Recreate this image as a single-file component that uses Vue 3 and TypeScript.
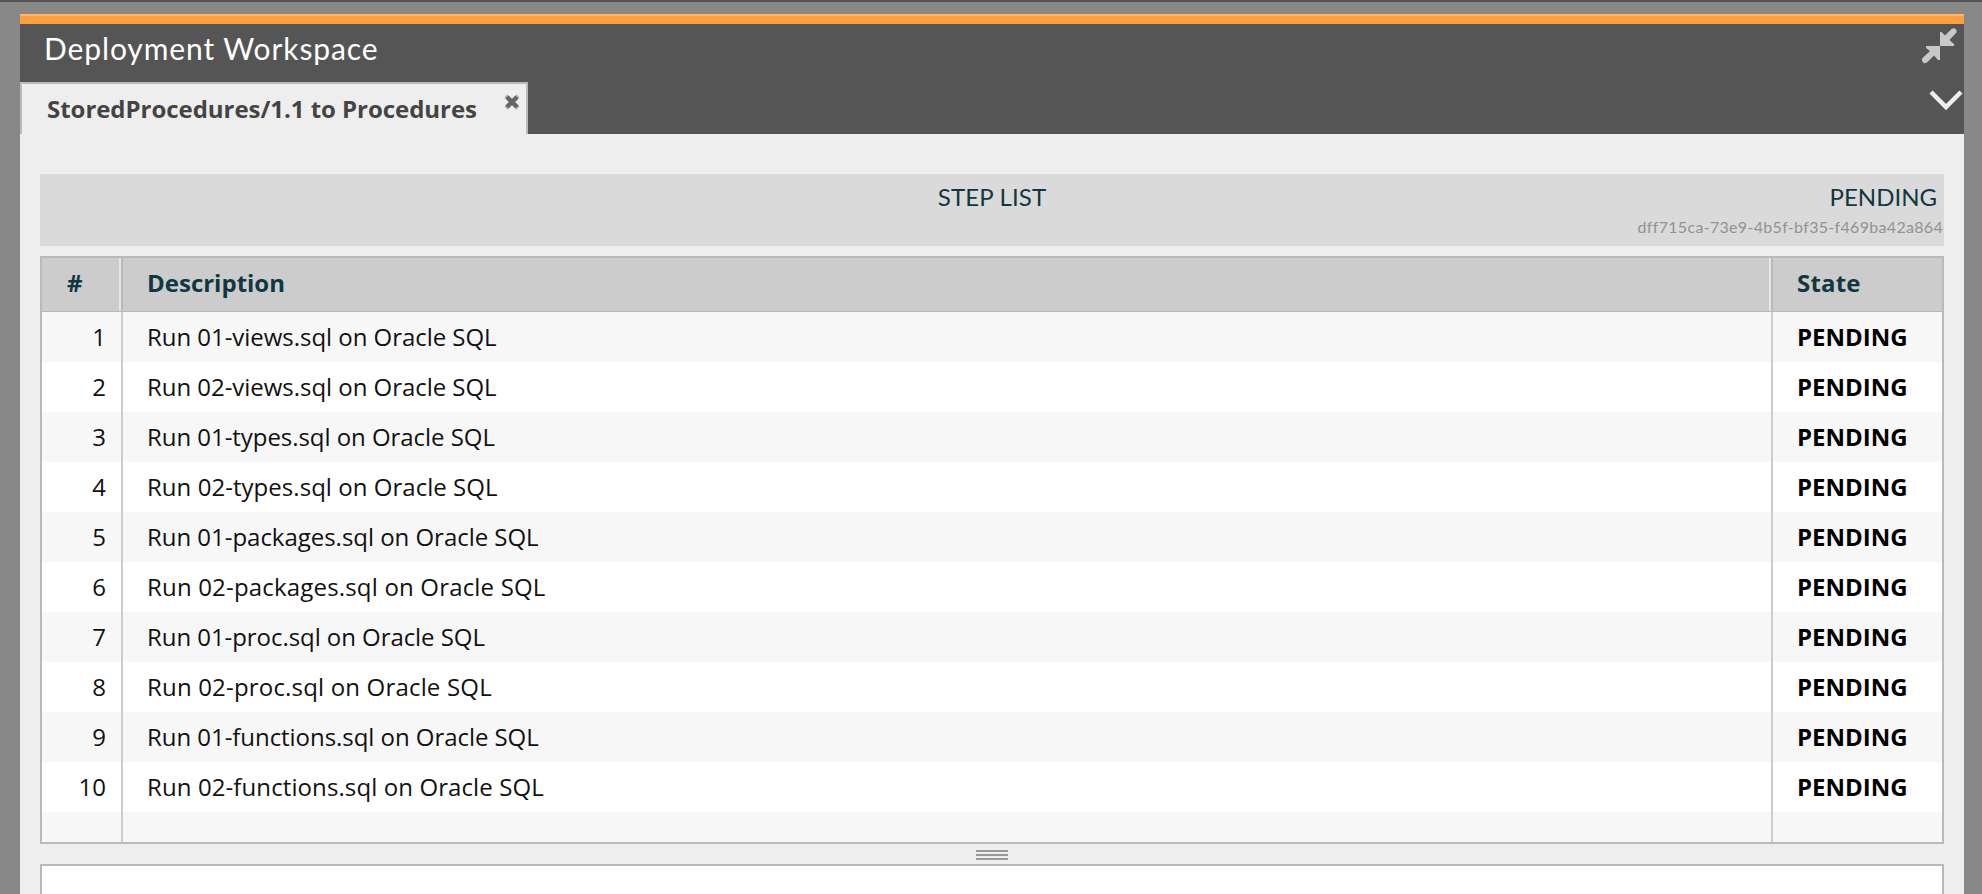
<script setup lang="ts">
interface Step {
  id: number
  description: string
  state: string
  tracking: number
}

// File stem and the letter spacing (px) of its line
const files: [string, number][] = [
  ['01-views', -0.04],
  ['02-views', -0.04],
  ['01-types', -0.05],
  ['02-types', 0.04],
  ['01-packages', -0.03],
  ['02-packages', 0.18],
  ['01-proc', -0.06],
  ['02-proc', 0.18],
  ['01-functions', -0.05],
  ['02-functions', 0.1],
]

const steps: Step[] = files.map(([file, tracking], i) => ({
  id: i + 1,
  description: `Run ${file}.sql on Oracle SQL`,
  state: 'PENDING',
  tracking,
}))
</script>

<template>
  <div class="page">
    <main class="workspace">
      <header class="head">
        <div class="title-row">
          <h1 class="title">Deployment Workspace</h1>
          <svg class="collapse" width="36" height="36" viewBox="0 0 36 36" fill="#c8c8c8">
            <path d="M18 18V4H19.500L23 7.500L29.500 1L32 0L34.500 2V4.500L27.500 12L32 16V18Z" />
            <path d="M18 18V32H16L12 27.500L5 34.500L2 35.500L0 33V30.500L8 23L4 20V18Z" />
          </svg>
        </div>
        <div class="tab-row">
          <div class="tab">
            <span class="tab-label">StoredProcedures/1.1 to Procedures</span>
            <svg class="close" width="16" height="16" viewBox="0 0 16 16">
              <path d="M2 2L14 14M14 2L2 14" stroke="#aaa" stroke-width="4" />
              <path d="M3 3L13 13M13 3L3 13" stroke="#666" stroke-width="4.500" />
            </svg>
          </div>
          <svg class="chevron" width="34" height="22" viewBox="0 0 34 22">
            <path d="M2 2L17 17L32 2" fill="none" stroke="#eee" stroke-width="4.500" />
          </svg>
        </div>
      </header>

      <section class="content">
        <div class="summary">
          <span class="summary-title">STEP LIST</span>
          <div class="summary-side">
            <span class="summary-state">PENDING</span>
            <span class="summary-id">dff715ca-73e9-4b5f-bf35-f469ba42a864</span>
          </div>
        </div>

        <div class="table">
          <div class="row head-row">
            <div class="cell num"><span>#</span></div>
            <div class="cell desc"><span>Description</span></div>
            <div class="cell state"><span>State</span></div>
          </div>
          <div v-for="step in steps" :key="step.id" class="row">
            <div class="cell num"><span>{{ step.id }}</span></div>
            <div class="cell desc">
              <span :style="{ letterSpacing: step.tracking + 'px' }">{{ step.description }}</span>
            </div>
            <div class="cell state"><span>{{ step.state }}</span></div>
          </div>
          <div class="row filler">
            <div class="cell num"></div>
            <div class="cell desc"></div>
            <div class="cell state"></div>
          </div>
        </div>

        <div class="splitter"><i></i><i></i><i></i></div>
        <div class="details"></div>
      </section>
    </main>
  </div>
</template>

<style>
body {
  overflow: hidden;
}
</style>

<style scoped>
.page {
  box-sizing: border-box;
  height: 894px;
  padding: 12px 18px 0 20px;
  border-top: 2px solid #555;
  background: #888;
  font-family: "Open Sans", "Noto Sans", sans-serif;
  font-size: 24px;
  overflow: hidden;
}
.workspace {
  height: 880px;
  display: flex;
  flex-direction: column;
  background: #eee;
}
.head {
  box-sizing: border-box;
  height: 120px;
  background: #555;
  border-top: 2px solid #ffb36b;
  box-shadow: inset 0 8px #ff9e3b;
}
.title-row {
  height: 66px;
  display: flex;
  justify-content: space-between;
}
.title {
  margin: 14px 0 0 24px;
  font: 400 30px/36px Lato, sans-serif;
  color: #fff;
  letter-spacing: 0.9px;
}
.collapse {
  margin: 12px 6px 0 0;
}
.tab-row {
  height: 52px;
  display: flex;
  justify-content: space-between;
}
.tab {
  box-sizing: border-box;
  width: 508px;
  height: 52px;
  padding-left: 25px;
  display: flex;
  justify-content: space-between;
  border: 2px solid #bbb;
  border-bottom: 0;
  background: #eee;
  color: #444;
}
.tab-label {
  font-weight: 700;
  line-height: 50px;
  letter-spacing: -0.04px;
  white-space: nowrap;
}
.close {
  margin: 10px 6px 0 0;
}
.chevron {
  margin: 8px 1px 0 0;
}
.content {
  flex: 1;
  display: flex;
  flex-direction: column;
  padding: 40px 20px 0;
}
.summary {
  height: 72px;
  flex: none;
  display: grid;
  grid-template-columns: 1fr auto 1fr;
  background: #dadada;
  font-family: Lato, sans-serif;
  color: #0f3840;
}
.summary-title {
  grid-column: 2;
  line-height: 46px;
  letter-spacing: 0.15px;
}
.summary-side {
  display: flex;
  flex-direction: column;
  align-items: flex-end;
}
.summary-state {
  line-height: 46px;
  margin-right: 7px;
}
.summary-id {
  margin: -4px 1px 0 0;
  font-size: 16px;
  line-height: 22px;
  letter-spacing: 0.31px;
  color: #929292;
}
.table {
  height: 584px;
  flex: none;
  margin-top: 10px;
  border: 2px solid #b5babe;
  background: #fff;
}
.row {
  height: 50px;
  display: grid;
  grid-template-columns: 81px 1fr 169px;
  background: #f7f7f7;
  color: #111;
}
.row:nth-child(odd) {
  background: #fff;
}
.row.filler {
  height: 30px;
  background: #f7f7f7;
}
.row.head-row {
  height: 54px;
  background: #ccc;
  color: #0f3840;
  font-weight: 700;
}
.cell {
  box-sizing: border-box;
  line-height: 50px;
  padding-left: 24px;
  border-right: 2px solid #ccc;
  white-space: nowrap;
}
.cell.num {
  padding: 0 15px 0 0;
  text-align: right;
}
.cell.state {
  border-right: 0;
  font-weight: 700;
  color: #000;
}
.head-row .cell {
  line-height: 50px;
  border-right-color: #b5babe;
  border-bottom: 1px solid #b5babe;
  box-shadow: inset -2px 0 #e6e6e6;
  color: #0f3840;
}
.head-row .cell.num {
  padding-left: 25px;
  text-align: left;
}
.head-row .cell.state {
  box-shadow: none;
  letter-spacing: 0.2px;
}
.splitter {
  height: 20px;
  flex: none;
  display: flex;
  flex-direction: column;
  align-items: center;
  gap: 2px;
  padding-top: 6px;
  box-sizing: border-box;
}
.splitter i {
  width: 32px;
  height: 2px;
  background: #999;
}
.details {
  flex: 1;
  border: 2px solid #b5babe;
  border-bottom: 0;
  background: #fff;
}
</style>
